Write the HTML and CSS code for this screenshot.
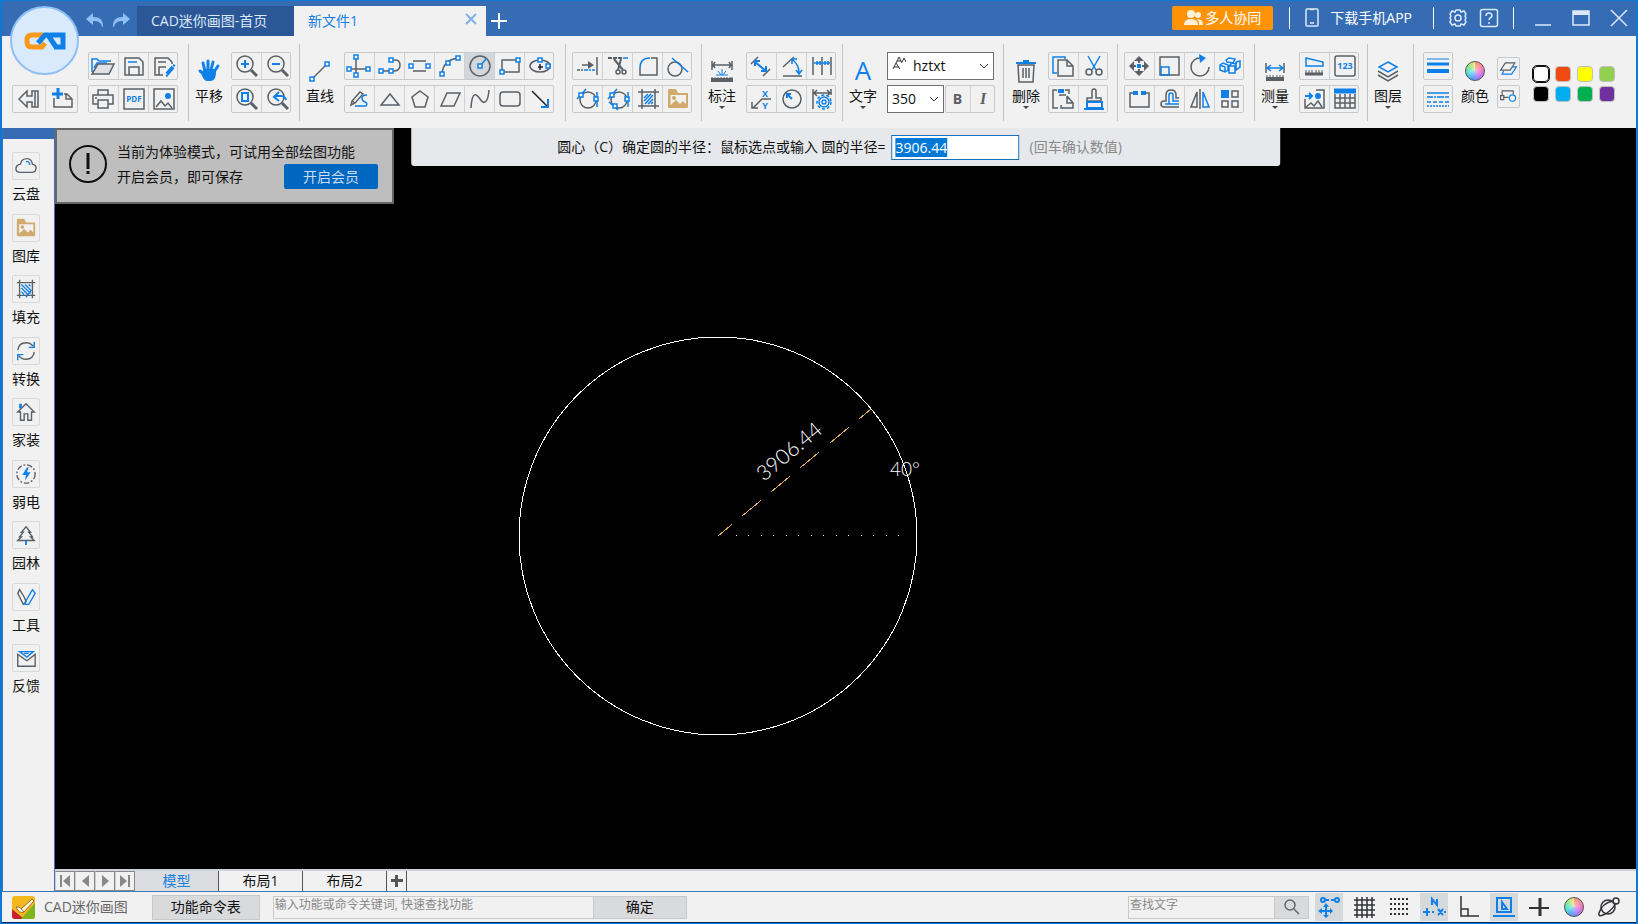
FILE: index.html
```html
<!DOCTYPE html>
<html lang="zh-CN">
<head>
  <meta charset="UTF-8">
  <meta name="viewport" content="width=device-width, initial-scale=1">
  <title>CAD迷你画图</title>
  <link rel="stylesheet" href="styles.css">
</head>
<body>
  <!-- shared icon parts -->
  <svg class="sprite" width="0" height="0">
    <defs><rect id="node" x="-2" y="-2" width="4" height="4"/></defs>
    <symbol id="lens" viewBox="0 0 24 24"><circle cx="11" cy="10" r="8"/><path d="M17 16l6 6" stroke-width="3"/></symbol>
    <symbol id="picfolder" viewBox="0 0 24 24">
      <path d="M2 6V3q0-1 1-1h7l2 4h9q1 0 1 1v13q0 1-1 1H3q-1 0-1-1z" fill="#d2aa6d" stroke="none"/>
      <path d="M4.500 8H20v9l-3-3-3 3-4-4-5.500 5z" fill="#f1f1f1" stroke="none"/>
      <circle cx="8" cy="11" r="2" fill="#d2aa6d" stroke="none"/>
    </symbol>
  </svg>

  <header class="titlebar">
    <div class="logo">
      <svg width="42" height="18" viewBox="0 0 42 18" fill="none">
        <path d="M19 3H8Q3 3 3 8v2q0 5 5 5h10l3-4" class="logo-c"/>
        <path d="M14 11l7-8h3l8 12M26 3h13v12h-9" class="logo-d"/>
      </svg>
    </div>
    <div class="history">
      <button aria-label="撤销"><svg width="18" height="16" viewBox="0 0 18 16"><path d="M0 6l7-6v4c7 0 10 3 10 9q0 1-1 1c-1-5-4-6-9-6v4z"/></svg></button>
      <button aria-label="重做"><svg width="18" height="16" viewBox="0 0 18 16"><path d="M18 6l-7-6v4C4 4 1 7 1 13q0 1 1 1c1-5 4-6 9-6v4z"/></svg></button>
    </div>
    <nav class="file-tabs">
      <a class="file-tab" href="#home">CAD迷你画图-首页</a>
      <a class="file-tab active" href="#file1">新文件1
        <svg width="12" height="12" viewBox="0 0 12 12"><path d="M1 1l10 10M11 1L1 11"/></svg>
      </a>
      <button class="add-tab" aria-label="新建"><svg width="16" height="16" viewBox="0 0 16 16"><path d="M8 0v16M0 8h16"/></svg></button>
    </nav>
    <div class="title-actions">
      <button class="team">
        <svg width="19" height="16" viewBox="0 0 19 16"><circle cx="7" cy="4" r="4"/><path d="M0 15q0-6 7-6t7 6z"/><circle cx="14" cy="5" r="3"/><path d="M15 15q0-4-2-6 6 0 6 6z"/></svg>
        多人协同
      </button>
      <a class="app-link" href="#app">
        <svg width="14" height="19" viewBox="0 0 14 19"><rect x="1" y="1" width="12" height="17" rx="1"/><path d="M5 15h4M5 1.500h4"/></svg>
        下载手机APP
      </a>
      <div class="help">
        <button aria-label="设置"><svg width="20" height="20" viewBox="0 0 20 20"><path d="M8 2h4l1 2 3-1 2 3-1 2 1 2-1 2 1 2-2 3-3-1-1 2H8l-1-2-3 1-2-3 1-2-1-2 1-2-1-2 2-3 3 1z"/><circle cx="10" cy="10" r="3"/></svg></button>
        <button aria-label="帮助"><svg width="20" height="20" viewBox="0 0 20 20"><rect x="1.500" y="1.500" width="17" height="17" rx="2"/><path d="M7 8q0-3 3-3t3 3q0 1-2 2-1 1-1 2M10 14v2"/></svg></button>
      </div>
      <div class="window-buttons">
        <button aria-label="最小化"><svg width="18" height="18" viewBox="0 0 18 18"><path d="M1 16h16"/></svg></button>
        <button aria-label="最大化"><svg width="18" height="18" viewBox="0 0 18 18"><rect x="1" y="2" width="16" height="14"/><path d="M1 4h16" stroke-width="4"/></svg></button>
        <button aria-label="关闭"><svg width="18" height="18" viewBox="0 0 18 18"><path d="M1 1l16 16M17 1L1 17"/></svg></button>
      </div>
    </div>
  </header>

  <section class="ribbon">
    <!-- file -->
    <div class="group file-group">
      <div class="rows bottom">
        <div class="box large">
          <button aria-label="退出"><svg class="icon" viewBox="0 0 24 24"><path d="M2 12l8-8v5h5V4h6v16h-6v-5h-5v5zM18 4v16"/></svg></button>
          <button aria-label="新建文件"><svg class="icon" viewBox="0 0 24 24"><path d="M4 11v9h18v-8l-5-5h-3M16 7v5h6"/><path class="blue" d="M8 1v11M2 7h11" stroke-width="3"/></svg></button>
        </div>
      </div>
      <div class="rows">
        <div class="box">
          <button aria-label="打开"><svg class="icon" viewBox="0 0 24 24"><path class="blue" d="M1 18V5h5l2 2h12M3 14l3-5h10"/><path d="M7 10h16l-5 10H1z" fill="#dfe1e4"/></svg></button>
          <button aria-label="保存"><svg class="icon" viewBox="0 0 24 24"><path d="M3 4h14l4 4v13H3zM7 21v-8h10v8"/><path class="blue" d="M6 8h9"/></svg></button>
          <button aria-label="另存为"><svg class="icon" viewBox="0 0 24 24"><path d="M11 21H3V4h13l4 4v2M7 21v-8h7M6 8h8"/><path class="blue" d="M15 20l6-7" stroke-width="4"/><path class="blue" d="M14 22l2-1M21 11l2 1" stroke-width="2"/></svg></button>
        </div>
        <div class="box">
          <button aria-label="打印"><svg class="icon" viewBox="0 0 24 24"><path d="M7 8V3h10v5M7 17H2V8h20v9h-5M4 11h2"/><rect x="7" y="13" width="10" height="8"/></svg></button>
          <button aria-label="导出PDF"><svg class="icon" viewBox="0 0 24 24"><rect x="2" y="2" width="20" height="20"/><text x="12" y="15" font-size="8">PDF</text></svg></button>
          <button aria-label="导出图片"><svg class="icon" viewBox="0 0 24 24"><rect x="2" y="2" width="20" height="20"/><path d="M4 20l5-6 4 5 3-3 4 5"/><circle class="blue-fill" cx="16" cy="9" r="3"/></svg></button>
        </div>
      </div>
    </div>

    <!-- view -->
    <div class="group tight">
      <button class="tool">
        <svg class="icon" viewBox="0 0 24 24"><path class="hand" d="M8 12L6 4M11 11V2M14 11l2-8M17 13l4-6M8 16l-5-4"/><path class="blue-fill" d="M7 10h10l2 3c0 6-2 9-6 9h-3c-3 0-5-5-6-8z"/></svg>
        <span>平移</span>
      </button>
      <div class="rows">
        <div class="box">
          <button aria-label="放大"><svg class="icon" viewBox="0 0 24 24"><use href="#lens"/><path class="blue" d="M11 6v8M7 10h8" stroke-width="2"/></svg></button>
          <button aria-label="缩小"><svg class="icon" viewBox="0 0 24 24"><use href="#lens"/><path class="blue" d="M7 10h8" stroke-width="2"/></svg></button>
        </div>
        <div class="box">
          <button aria-label="窗口缩放"><svg class="icon" viewBox="0 0 24 24"><use href="#lens"/><rect class="blue" x="8" y="6" width="6" height="8" stroke-width="2"/></svg></button>
          <button aria-label="上一视图"><svg class="icon" viewBox="0 0 24 24"><use href="#lens"/><path class="blue" d="M14 5l-5 5 5 4M9 9h7q4 0 5 4" stroke-width="2"/></svg></button>
        </div>
      </div>
    </div>

    <!-- draw -->
    <div class="group">
      <button class="tool">
        <svg class="icon" viewBox="0 0 24 24"><path d="M5 19L19 5"/><g class="nodes"><use href="#node" x="4" y="20"/><use href="#node" x="19" y="5"/></g></svg>
        <span>直线</span>
      </button>
      <div class="rows">
        <div class="box">
          <button aria-label="构造线"><svg class="icon" viewBox="0 0 24 24"><path d="M9 3v18M2 15h19"/><g class="nodes"><use href="#node" x="9" y="3"/><use href="#node" x="2" y="15"/><use href="#node" x="21" y="15"/><use href="#node" x="9" y="21"/></g></svg></button>
          <button aria-label="多段线"><svg class="icon" viewBox="0 0 24 24"><path d="M3 17h10M13 6h4q5 0 5 5t-5 6h-4"/><g class="nodes"><use href="#node" x="3" y="17"/><use href="#node" x="13" y="17"/><use href="#node" x="13" y="6"/></g></svg></button>
          <button aria-label="双线"><svg class="icon" viewBox="0 0 24 24"><path d="M5 7h13M5 17h13"/><g class="nodes"><use href="#node" x="3" y="12"/><use href="#node" x="20" y="12"/></g></svg></button>
          <button aria-label="圆弧"><svg class="icon" viewBox="0 0 24 24"><path d="M4 20Q5 6 20 4"/><g class="nodes"><use href="#node" x="4" y="20"/><use href="#node" x="10" y="9"/><use href="#node" x="20" y="4"/></g></svg></button>
          <button class="selected" aria-label="圆"><svg class="icon" viewBox="0 0 24 24"><circle cx="12" cy="12" r="10"/><path class="blue" d="M12 12l6-7"/><g class="nodes"><use href="#node" x="12" y="12"/></g></svg></button>
          <button aria-label="矩形"><svg class="icon" viewBox="0 0 24 24"><rect x="4" y="6" width="17" height="12"/><g class="nodes"><use href="#node" x="20" y="6"/><use href="#node" x="4" y="18"/></g></svg></button>
          <button aria-label="椭圆"><svg class="icon" viewBox="0 0 24 24"><ellipse cx="12" cy="12" rx="10" ry="6"/><path d="M12 10v6M10 13h5" stroke="#222"/><g class="nodes"><use href="#node" x="12" y="6"/><use href="#node" x="20" y="12"/></g></svg></button>
        </div>
        <div class="box">
          <button aria-label="手绘"><svg class="icon" viewBox="0 0 24 24"><path d="M4 18l1-4 8-9 3 2-8 9zM5 14l3 2"/><path class="blue" d="M20 8q-5 0-5 3t3 4 1 4H8"/></svg></button>
          <button aria-label="三角形"><svg class="icon" viewBox="0 0 24 24"><path d="M3 18l9-11 9 11z"/></svg></button>
          <button aria-label="多边形"><svg class="icon" viewBox="0 0 24 24"><path d="M12 4l8 6-3 10H7L4 10z"/></svg></button>
          <button aria-label="平行四边形"><svg class="icon" viewBox="0 0 24 24"><path d="M9 6h13l-6 13H3z"/></svg></button>
          <button aria-label="样条曲线"><svg class="icon" viewBox="0 0 24 24"><path d="M3 21C4 4 8 6 12 12s8 4 9-9"/></svg></button>
          <button aria-label="圆角矩形"><svg class="icon" viewBox="0 0 24 24"><rect x="2" y="5" width="20" height="14" rx="3"/></svg></button>
          <button aria-label="箭头"><svg class="icon" viewBox="0 0 24 24"><path d="M4 4l15 15" stroke="#222"/><path class="blue" d="M20 12v8h-7" stroke-width="2"/></svg></button>
        </div>
      </div>
    </div>

    <!-- modify -->
    <div class="group">
      <div class="rows">
        <div class="box">
          <button aria-label="延伸"><svg class="icon" viewBox="0 0 24 24"><path d="M2 16h3M6 16h2M7 11h10M22 3v18"/><path d="M13 7l6 4-6 4z" class="gray-fill"/><path class="blue" d="M9 16h4M14 16h2M17 16h3"/></svg></button>
          <button aria-label="修剪"><svg class="icon" viewBox="0 0 24 24"><path d="M2 4h4M7 4h4M12 4h4M8 5l9 11M15 5l-3 11" stroke-width="2"/><circle cx="12" cy="18" r="2"/><circle cx="18" cy="18" r="2"/><path class="blue" d="M17 4h5"/></svg></button>
          <button aria-label="圆角"><svg class="icon" viewBox="0 0 24 24"><path d="M4 14v7h17V4h-6"/><path class="blue" d="M4 14Q4 4 14 4"/></svg></button>
          <button aria-label="切线"><svg class="icon" viewBox="0 0 24 24"><circle cx="9" cy="15" r="7"/><path class="blue" d="M6 4l16 14"/></svg></button>
        </div>
        <div class="box">
          <button aria-label="两点相切"><svg class="icon" viewBox="0 0 24 24"><circle cx="13" cy="13" r="8"/><path class="blue" d="M2 12L11 2M22 5v15"/><g class="nodes"><use href="#node" x="6" y="8"/><use href="#node" x="21" y="12"/></g></svg></button>
          <button aria-label="三点相切"><svg class="icon" viewBox="0 0 24 24"><circle cx="13" cy="13" r="8"/><path class="blue" d="M2 12L11 2M22 5v15M3 15l9 8"/><g class="nodes"><use href="#node" x="6" y="8"/><use href="#node" x="21" y="12"/><use href="#node" x="9" y="19"/></g></svg></button>
          <button aria-label="图案填充"><svg class="icon" viewBox="0 0 24 24"><path d="M6 2v20M19 2v20M2 5h21M2 19h21"/><path class="blue" d="M8 11l4-4M8 14l7-7M9 17l8-9M12 17l5-5M15 17l2-2"/></svg></button>
          <button aria-label="图片"><svg class="icon" viewBox="0 0 24 24"><use href="#picfolder"/></svg></button>
        </div>
      </div>
    </div>

    <!-- dimension -->
    <div class="group">
      <button class="tool">
        <svg class="icon" viewBox="0 0 24 24"><path d="M2 2v9M22 2v9M2 6h20M5 3L3 6l2 3M19 3l2 3-2 3"/><path class="blue" d="M12 10v6M8 12l3 4M16 12l-3 4M6 16h12" stroke-width="1"/><path d="M1 21h22" stroke-width="4"/><path d="M2 18v2M5 18v2M8 18v2M11 18v2M14 18v2M17 18v2M20 18v2M22 18v2" stroke-width="1"/></svg>
        <span>标注</span><i class="caret"></i>
      </button>
      <div class="rows">
        <div class="box">
          <button aria-label="对齐标注"><svg class="icon" viewBox="0 0 24 24"><path d="M2 10l7-7M14 22l7-7"/><path class="blue" d="M6 8l11 9M6 12V7h5M17 12v5h-5" stroke-width="2"/></svg></button>
          <button aria-label="角度标注"><svg class="icon" viewBox="0 0 24 24"><path d="M3 13L14 3M3 22h19"/><path class="blue" d="M13 6q6 5 6 13M12 10V5h5M16 16l3 4 3-4"/></svg></button>
          <button aria-label="连续标注"><svg class="icon" viewBox="0 0 24 24"><path d="M3 3v18M12 3v18M21 3v18"/><path class="blue" d="M4 9h16M7 7v4M10 7v4M15 7v4M18 7v4"/></svg></button>
        </div>
        <div class="box">
          <button aria-label="坐标标注"><svg class="icon" viewBox="0 0 24 24"><path d="M22 12h-9l-9 9M3 15v6h6"/><text x="16" y="10" font-size="9">X</text><text x="16" y="22" font-size="9">Y</text></svg></button>
          <button aria-label="半径标注"><svg class="icon" viewBox="0 0 24 24"><circle cx="12" cy="12" r="9"/><path class="blue" d="M12 12L7 7M7 11V7h4" stroke-width="2"/></svg></button>
          <button aria-label="标注设置"><svg class="icon" viewBox="0 0 24 24"><path d="M3 2v20M21 2v6M4 6h16M7 3L4 6l3 3M17 3l3 3-3 3"/><circle class="blue" cx="14" cy="15" r="5"/><circle class="blue" cx="14" cy="15" r="2"/><circle class="blue" cx="14" cy="15" r="7" stroke-dasharray="3 2"/></svg></button>
        </div>
      </div>
    </div>

    <!-- text -->
    <div class="group">
      <button class="tool">
        <svg class="icon" viewBox="0 0 24 24"><text class="letter" x="12" y="21" font-size="26">A</text></svg>
        <span>文字</span><i class="caret"></i>
      </button>
      <div class="rows">
        <div class="picker font-picker">
          <select aria-label="字体"><option>hztxt</option></select>
          <svg class="font-mark" width="14" height="14" viewBox="0 0 14 14"><path d="M4 7l3-6 3 6M5 5h4M1 13l3-6 4 6M2 11h5M10 6l2-4 2 4"/></svg>
          <svg class="chevron" width="10" height="6" viewBox="0 0 10 6"><path d="M1 1l4 4 4-4"/></svg>
        </div>
        <div class="text-row">
          <div class="picker size-picker">
            <select aria-label="字高"><option>350</option></select>
            <svg class="chevron" width="10" height="6" viewBox="0 0 10 6"><path d="M1 1l4 4 4-4"/></svg>
          </div>
          <div class="box small">
            <button class="bold">B</button>
            <button class="italic">I</button>
          </div>
        </div>
      </div>
    </div>

    <!-- delete and clipboard -->
    <div class="group delete-group">
      <button class="tool">
        <svg class="icon" viewBox="0 0 24 24"><path d="M4 6h16l-1 17H5zM9 9v10M12 9v10M15 9v10"/><path class="blue" d="M2 4h20M9 2h6" stroke-width="2"/></svg>
        <span>删除</span><i class="caret"></i>
      </button>
      <div class="rows">
        <div class="box">
          <button aria-label="复制"><svg class="icon" viewBox="0 0 24 24"><path class="blue" d="M6 19H2V3h12v2"/><path d="M7 6h9l6 6v10H7zM16 6v6h6"/></svg></button>
          <button aria-label="剪切"><svg class="icon" viewBox="0 0 24 24"><path class="blue" d="M6 2l8 14M18 2l-8 14"/><circle cx="7" cy="18" r="3"/><circle cx="17" cy="18" r="3"/></svg></button>
        </div>
        <div class="box">
          <button aria-label="粘贴"><svg class="icon" viewBox="0 0 24 24"><path d="M6 3H2v18h5M14 3h4v4M9 9V8h6M16 9v7h6v5H10v-3M16 9l6 7"/><path class="blue" d="M7 4h6" stroke-width="4"/></svg></button>
          <button aria-label="格式刷"><svg class="icon" viewBox="0 0 24 24"><path d="M10 11V4q0-2 2-2t2 2v7h5v3H5v-3z"/><path class="blue" d="M5 15h15v6H5zM2 22h20" stroke-width="2"/></svg></button>
        </div>
      </div>
    </div>

    <!-- transform -->
    <div class="group">
      <div class="rows">
        <div class="box">
          <button aria-label="移动"><svg class="icon" viewBox="0 0 24 24"><path class="gray-fill" d="M12 2l5 5h-4v2h-2V7H7zM12 22l5-5h-4v-2h-2v2H7zM2 12l5-5v4h2v2H7v4zM22 12l-5-5v4h-2v2h2v4z"/><path class="blue" d="M10 12h4" stroke-width="4"/></svg></button>
          <button aria-label="缩放"><svg class="icon" viewBox="0 0 24 24"><rect x="2" y="3" width="19" height="18"/><rect class="blue" x="3" y="13" width="8" height="8"/></svg></button>
          <button aria-label="旋转"><svg class="icon" viewBox="0 0 24 24"><path d="M13 4a9 9 0 1 0 8 9"/><path class="blue-fill" d="M11 0l7 4-6 5z"/></svg></button>
          <button aria-label="三维"><svg class="icon" viewBox="0 0 24 24"><path class="blue" d="M2 11l3-2 5 2v5l-3 2-5-2zM2 11l5 2v5M8 6l3-2 6 1-2 4-6-1zM11 12h6v7h-6zM11 12l3-3 4 1-1 2M18 8l4-1v6l-4 3z"/></svg></button>
        </div>
        <div class="box">
          <button aria-label="打断"><svg class="icon" viewBox="0 0 24 24"><path d="M6 6H3v14h19V6h-3"/><path class="blue" d="M6 6h5M14 6h5" stroke-width="4"/></svg></button>
          <button aria-label="偏移"><svg class="icon" viewBox="0 0 24 24"><path d="M21 20H6q-3 0-3-3t3-3h2V8q0-5 5-5t5 5v3h3"/><path class="blue" d="M21 17H7h4V8q0-2 2-2t2 2v6h6"/></svg></button>
          <button aria-label="镜像"><svg class="icon" viewBox="0 0 24 24"><path d="M12 2v20M9 5v15H3z"/><path class="blue" d="M15 5v15h6z"/></svg></button>
          <button aria-label="阵列"><svg class="icon" viewBox="0 0 24 24"><path class="blue-fill" d="M3 3h8v8H3z"/><path d="M14 4h6v6h-6zM4 14h6v6H4zM14 14h6v6h-6z"/></svg></button>
        </div>
      </div>
    </div>

    <!-- measure -->
    <div class="group">
      <button class="tool">
        <svg class="icon" viewBox="0 0 24 24"><path d="M3 4v10M21 4v10"/><path class="blue" d="M4 9h16M8 6L4 9l4 3M16 6l4 3-4 3"/><path d="M3 20h18" stroke-width="4"/><path d="M4 16v3M7 16v3M10 16v3M14 16v3M17 16v3M20 16v3" stroke-width="1"/></svg>
        <span>测量</span><i class="caret"></i>
      </button>
      <div class="rows">
        <div class="box">
          <button aria-label="面积"><svg class="icon" viewBox="0 0 24 24"><path class="blue" d="M4 4v8h17V8z"/><path d="M3 20h18" stroke-width="3"/><path d="M4 16v3M7 16v3M10 16v3M14 16v3M17 16v3M20 16v3" stroke-width="1"/></svg></button>
          <button aria-label="计数"><svg class="icon" viewBox="0 0 24 24"><rect x="2" y="2" width="20" height="20" rx="2"/><text x="12" y="15" font-size="9">123</text></svg></button>
        </div>
        <div class="box">
          <button aria-label="识别图片"><svg class="icon" viewBox="0 0 24 24"><path d="M3 12v9h19V3h-8M4 20l5-4 3 3 4-5 4 6"/><path class="blue" d="M3 9h7M7 6l3 3-3 3" stroke-width="2"/><circle class="blue-fill" cx="16" cy="9" r="3"/></svg></button>
          <button aria-label="表格"><svg class="icon" viewBox="0 0 24 24"><path d="M2 7v14h20V7M2 11h20M2 16h20M7 7v14M12 7v14M17 7v14"/><path class="blue" d="M1 4h22" stroke-width="5"/></svg></button>
        </div>
      </div>
    </div>

    <!-- layers -->
    <div class="group">
      <button class="tool">
        <svg class="icon" viewBox="0 0 24 24"><path class="blue" d="M12 3l9 5-9 5-9-5z"/><path d="M2 12l10 6 10-6M2 16l10 6 10-6"/></svg>
        <span>图层</span><i class="caret"></i>
      </button>
    </div>

    <!-- colour and line style -->
    <div class="group color-group">
      <div class="rows">
        <div class="box"><button aria-label="线宽"><svg class="icon" viewBox="0 0 24 24"><path class="blue" d="M1 5h22" stroke-width="1"/><path class="blue" d="M1 10h22" stroke-width="3"/><path class="blue" d="M1 17h22" stroke-width="4"/></svg></button></div>
        <div class="box"><button aria-label="线型"><svg class="icon" viewBox="0 0 24 24"><path class="blue" d="M1 6h22M1 10h6M8 10h2M11 10h7M19 10h4M1 15h4M7 15h4M13 15h4M19 15h4M1 19h2M4 19h2M7 19h2M10 19h2M13 19h2M16 19h2M19 19h2M22 19h1"/></svg></button></div>
      </div>
      <button class="tool">
        <i class="wheel"></i>
        <span>颜色</span>
      </button>
      <div class="rows compact">
        <div class="box"><button aria-label="随层"><svg class="icon" viewBox="0 0 24 24"><path class="blue" d="M14 10h8l-6 9H4l2-4"/><path d="M8 5h12l-6 9H2z" fill="#f1f1f1"/></svg></button></div>
        <div class="box"><button aria-label="随块"><svg class="icon" viewBox="0 0 24 24"><path d="M2 11h4v5H2zM4 11V5h14v4M6 13h6"/><circle class="blue" cx="17" cy="14" r="4"/></svg></button></div>
      </div>
      <div class="swatches">
        <button class="white current" aria-label="白"></button>
        <button class="orange" aria-label="橙"></button>
        <button class="yellow" aria-label="黄"></button>
        <button class="lime" aria-label="浅绿"></button>
        <button class="black" aria-label="黑"></button>
        <button class="cyan" aria-label="蓝"></button>
        <button class="green" aria-label="绿"></button>
        <button class="purple" aria-label="紫"></button>
      </div>
    </div>
  </section>

  <main class="workspace">
    <aside class="sidebar">
      <nav class="side-nav">
        <button><svg class="icon" viewBox="0 0 24 24"><path d="M6 19q-5 0-5-4t5-5q1-6 7-6 5 0 6 6 4 1 4 4 0 5-5 5z"/><path class="blue" d="M12 7q4 0 4 4"/></svg><span>云盘</span></button>
        <button><svg class="icon" viewBox="0 0 24 24"><use href="#picfolder"/></svg><span>图库</span></button>
        <button><svg class="icon" viewBox="0 0 24 24"><path d="M5 2v20M19 2v20M2 5h20M2 19h20"/><path class="blue" d="M7 15l3 3M7 11l7 7M7 7l10 10M11 7l6 6M15 7l2 2M12 21l6-8"/></svg><span>填充</span></button>
        <button><svg class="icon" viewBox="0 0 24 24"><path d="M3 11Q4 3 12 3q5 0 8 4M21 13q-1 8-9 8-5 0-8-4"/><path class="blue" d="M21 2v6h-6M3 22v-6h6"/></svg><span>转换</span></button>
        <button><svg class="icon" viewBox="0 0 24 24"><path d="M3 12l9-9 9 9h-3v9h-4v-7h-4v7H6v-9z"/><path class="blue" d="M6 3v5" stroke-width="3"/></svg><span>家装</span></button>
        <button><svg class="icon" viewBox="0 0 24 24"><circle cx="12" cy="12" r="10" stroke-dasharray="6 2 2 2"/><path class="blue-fill" d="M13 5l-5 8h4l-1 6 6-9h-4l2-5z"/></svg><span>弱电</span></button>
        <button><svg class="icon" viewBox="0 0 24 24"><path d="M12 3l5 6h-2l4 5h-2l4 4H3l4-4H5l4-5H7z"/><path class="blue" d="M12 18v5" stroke-width="2"/></svg><span>园林</span></button>
        <button><svg class="icon" viewBox="0 0 24 24"><path d="M5 4L3 8l6 12 3-3-2-5z"/><path class="blue" d="M19 4l3 4-7 12h-4l1-4z"/></svg><span>工具</span></button>
        <button><svg class="icon" viewBox="0 0 24 24"><path d="M3 8v13h19V8l-9 7z"/><path class="blue" d="M5 5h15l-7 6zM10 7h5"/></svg><span>反馈</span></button>
      </nav>
    </aside>

    <div class="view">
      <div class="canvas">
        <svg class="drawing" width="100%" height="100%">
          <circle class="shape" cx="663" cy="408" r="199"/>
          <path class="radius-line" d="M663 408L816 281"/>
          <path class="base-line" d="M681 407H846"/>
          <text x="0" y="0" font-size="21" transform="translate(709 354) rotate(-40)">3906.44</text>
          <text x="835" y="348" font-size="19">40°</text>
        </svg>

        <div class="notice">
          <svg width="38" height="38" viewBox="0 0 38 38"><circle cx="19" cy="19" r="18"/><path d="M19 8v16M19 26v3" stroke-width="3"/></svg>
          <p>当前为体验模式，可试用全部绘图功能</p>
          <p>开启会员，即可保存</p>
          <button>开启会员</button>
        </div>

        <form class="prompt">
          <label for="radius">圆心（C）确定圆的半径：鼠标选点或输入 圆的半径=</label>
          <input id="radius" type="text" value="3906.44">
          <span class="hint">(回车确认数值)</span>
        </form>
      </div>

      <nav class="layouts">
        <button class="step" aria-label="第一个"><svg width="12" height="12" viewBox="0 0 12 12"><path d="M1 0h2v12H1zM11 0v12L4 6z"/></svg></button>
        <button class="step" aria-label="上一个"><svg width="12" height="12" viewBox="0 0 12 12"><path d="M10 0v12L3 6z"/></svg></button>
        <button class="step" aria-label="下一个"><svg width="12" height="12" viewBox="0 0 12 12"><path d="M3 0v12l7-6z"/></svg></button>
        <button class="step" aria-label="最后一个"><svg width="12" height="12" viewBox="0 0 12 12"><path d="M9 0h2v12H9zM1 0v12l7-6z"/></svg></button>
        <a class="layout active" href="#model">模型</a>
        <a class="layout" href="#layout1">布局1</a>
        <a class="layout" href="#layout2">布局2</a>
        <button class="step add" aria-label="新建布局"><svg width="14" height="14" viewBox="0 0 14 14"><path d="M5 1h3v4h5v3H8v5H5V8H1V5h4z"/></svg></button>
      </nav>
    </div>
  </main>

  <footer class="statusbar">
    <svg class="app-icon" width="23" height="23" viewBox="0 0 23 23">
      <rect width="23" height="23" rx="3" fill="#f3b81c"/>
      <path d="M0 13v7q0 3 3 3h9z" fill="#c8202c"/>
      <path d="M23 7v13q0 3-3 3H9z" fill="#7fb51c"/>
      <path d="M9 13L20 3l2 2-10 11z" fill="#fff4d0" stroke="#a06a20"/>
      <path d="M4 11q4-1 8 5-5 2-8-5z" fill="#fff" stroke="#a06a20"/>
    </svg>
    <span class="app-name">CAD迷你画图</span>
    <button class="commands">功能命令表</button>
    <form class="command-line">
      <input type="text" aria-label="命令" placeholder="输入功能或命令关键词, 快速查找功能">
      <button type="button">确定</button>
    </form>
    <form class="search">
      <input type="text" aria-label="查找文字" placeholder="查找文字">
      <button type="button" aria-label="查找"><svg width="16" height="16" viewBox="0 0 16 16"><circle cx="6" cy="6" r="5"/><path d="M10 10l5 5"/></svg></button>
    </form>
    <div class="modes">
      <button class="on" aria-label="对象捕捉"><svg class="icon" viewBox="0 0 24 24"><path class="blue" d="M9 5h3M14 5h3" stroke-width="2"/><circle class="blue" cx="6" cy="5" r="2" stroke-width="2"/><circle class="blue" cx="20" cy="5" r="2" stroke-width="2"/><path class="blue-fill" d="M9 8l3 4h-2v3h3v-2l3 3-3 3v-2h-3v3h2l-3 3-3-3h2v-3H5v2l-4-3 4-3v2h3v-3H6z"/></svg></button>
      <button aria-label="栅格"><svg class="icon dark" viewBox="0 0 24 24"><path d="M5 2v21M10 2v21M15 2v21M20 2v21M2 5h21M2 10h21M2 15h21M2 20h21"/></svg></button>
      <button aria-label="捕捉"><svg class="icon dark" viewBox="0 0 24 24"><path d="M3 4h19M3 9h19M3 14h19M3 19h19" stroke-width="2" stroke-dasharray="2 2"/></svg></button>
      <button class="on" aria-label="极轴"><svg class="icon" viewBox="0 0 24 24"><path class="blue" d="M10 10V4l5 6V4M5 13v8M1 17h7M10 17h2M16 14l5 6M21 14l-5 6M22 17h2" stroke-width="2"/></svg></button>
      <button aria-label="正交"><svg class="icon dark" viewBox="0 0 24 24"><path d="M4 1v20h18M4 14h7v7"/></svg></button>
      <button class="on" aria-label="动态输入"><svg class="icon" viewBox="0 0 24 24"><path class="blue" d="M5 3h14v14H5zM1 21h22" stroke-width="2"/><path class="blue" d="M10 7v7h5z" stroke-width="2"/></svg></button>
      <button aria-label="十字光标"><svg class="icon dark" viewBox="0 0 24 24"><path d="M13 3v18" stroke-width="3"/><path d="M2 13h20" stroke-width="2"/></svg></button>
      <button aria-label="背景颜色"><i class="wheel"></i></button>
      <button aria-label="视图"><svg class="icon dark" viewBox="0 0 24 24"><circle cx="11" cy="12" r="7"/><path d="M16 6Q5 8 2 18q-1 4 4 2 8-3 13-12"/><circle cx="19" cy="6" r="3"/></svg></button>
    </div>
  </footer>

  <script>
    // the radius box is ready for typing over as soon as the page opens
    const radius = document.getElementById("radius");
    radius.focus();
    radius.select();
  </script>
</body>
</html>
```
FILE: styles.css
```css
*, *::before, *::after {
  box-sizing: border-box;
}
body {
  display: flex;
  flex-direction: column;
  height: 100vh;
  margin: 0;
  border: 1px solid #0f78d4;
  border-width: 1px 2px 1px 2px;
  background: #f1f1f1;
  color: #111;
  font: 14px/20px "Open Sans", "Noto Sans CJK SC", sans-serif;
  overflow: hidden;
}
button, input, select {
  margin: 0;
  padding: 0;
  border: 0;
  background: none;
  color: inherit;
  font: inherit;
}
button {
  display: flex;
  align-items: center;
  justify-content: center;
}
a {
  color: inherit;
  text-decoration: none;
}
p {
  margin: 0;
}
.sprite {
  position: absolute;
}

/* Icons */
.icon {
  width: 24px;
  height: 24px;
  flex: none;
  fill: none;
  stroke: #5a6066;
  stroke-width: 1.5;
  overflow: visible;
}
.icon text {
  fill: #0f80e8;
  stroke: none;
  font-family: "Open Sans", sans-serif;
  font-weight: bold;
  text-anchor: middle;
}
.icon .letter {
  font-weight: normal;
}
.dark {
  stroke: #303236;
}
.blue {
  stroke: #0f80e8;
}
.blue-fill {
  fill: #0f80e8;
  stroke: none;
}
.gray-fill {
  fill: #5a6066;
  stroke: none;
}
.hand {
  stroke: #0f80e8;
  stroke-width: 3;
  stroke-linecap: round;
}
.nodes {
  fill: #fff;
  stroke: #0f80e8;
}
.wheel {
  width: 20px;
  height: 20px;
  border: 1px solid #555;
  border-radius: 50%;
  background: radial-gradient(#fff8, #fff0 70%), conic-gradient(#f99a6a, #f06ac0 90deg, #b06af0 140deg, #4a9af5 200deg, #4ae0d0 260deg, #8ae87a 310deg, #f5e07a);
}

/* Title bar */
.titlebar {
  display: flex;
  flex: none;
  height: 35px;
  background: #366cb4;
  color: #fff;
}
.titlebar svg {
  fill: none;
  stroke: #dce8f8;
  stroke-width: 1.5;
}
.logo {
  position: absolute;
  top: 6px;
  left: 10px;
  display: flex;
  align-items: center;
  justify-content: center;
  width: 69px;
  height: 69px;
  border: 2px solid #90bff5;
  border-radius: 50%;
  background: #d8eafc;
}
.titlebar .logo svg {
  stroke-width: 5;
}
.logo-c {
  stroke: #f79a1c;
}
.logo-d {
  stroke: #0f80e8;
}
.history {
  display: flex;
  gap: 8px;
  margin-left: 84px;
  padding-right: 7px;
}
.titlebar .history svg {
  fill: #90bff5;
  stroke: none;
}
.history button {
  padding-top: 4px;
}
.file-tabs {
  display: flex;
  padding-top: 5px;
}
.file-tab {
  display: flex;
  align-items: center;
  width: 157px;
  padding-left: 14px;
  background: #2b5797;
  color: #dce8f8;
}
.file-tab.active {
  justify-content: space-between;
  width: 192px;
  padding: 0 9px 0 14px;
  background: #f1f1f1;
  color: #1a80e0;
}
.titlebar .file-tab svg {
  margin-bottom: 4px;
  stroke: #80b0f0;
  stroke-width: 2;
}
.add-tab {
  width: 26px;
}
.titlebar .add-tab svg {
  stroke: #fff;
  stroke-width: 2;
}
.title-actions {
  display: flex;
  align-items: center;
  height: 33px;
  margin-left: auto;
}
.team {
  gap: 2px;
  width: 101px;
  height: 24px;
  border-radius: 2px;
  background: #ff9308;
}
.titlebar .team svg {
  fill: #fff0d8;
  stroke: none;
}
.app-link {
  display: flex;
  align-items: center;
  gap: 11px;
  height: 22px;
  margin-left: 16px;
  padding: 0 21px 0 15px;
  border: solid #fff;
  border-width: 0 1px;
}
.help {
  display: flex;
  gap: 11px;
  height: 22px;
  padding: 0 14px;
  border-right: 1px solid #fff;
}
.window-buttons {
  display: flex;
  gap: 20px;
  padding: 0 8px 0 20px;
}

/* Ribbon */
.ribbon {
  display: grid;
  grid-template-columns: 187px 111px 266px 136px 141px 161px 114px 137px 113px 46px auto;
  flex: none;
  height: 92px;
  padding: 8px 0 7px;
}
.group {
  display: flex;
  align-items: flex-start;
  gap: 10px;
  padding: 8px 0 0 6px;
  border-right: 1px solid #c2c2c2;
}
.file-group {
  padding-left: 10px;
}
.tight {
  gap: 8px;
}
.delete-group {
  gap: 8px;
  padding-left: 8px;
}
.color-group {
  gap: 8px;
  padding-left: 9px;
  border: 0;
}
.rows {
  display: flex;
  flex-direction: column;
  gap: 5px;
}
.rows.bottom {
  padding-top: 33px;
}
.box {
  display: flex;
  outline: 1px solid #c8c9cb;
  outline-offset: -1px;
  border-radius: 2px;
}
.box button {
  width: 30px;
  height: 28px;
}
.box button + button {
  border-left: 1px solid #d0d1d3;
}
.box.large button {
  width: 33px;
}
.box.small button {
  width: 25px;
}
.box .selected {
  background: #d3d6db;
}
.compact {
  padding-top: 5px;
}
.compact .box button {
  width: 23px;
  height: 23px;
}
.compact .icon {
  width: 19px;
  height: 19px;
}
.tool {
  flex-direction: column;
  width: 28px;
  padding-top: 7px;
  white-space: nowrap;
}
.tool span {
  margin-top: 3px;
}
.tool .wheel {
  margin: 2px 0;
}
.caret {
  border: 3px solid transparent;
  border-top-color: #444;
}
.picker {
  display: grid;
  height: 28px;
  border: 1px solid #707070;
  background: #fff;
}
.picker > * {
  grid-area: 1 / 1;
}
.picker select {
  width: 100%;
  padding-left: 4px;
  appearance: none;
}
.picker svg {
  align-self: center;
  fill: none;
  stroke: #333;
  pointer-events: none;
}
.picker .chevron {
  justify-self: end;
  margin-right: 4px;
}
.picker .font-mark {
  margin: 0 0 6px 4px;
}
.font-picker {
  width: 107px;
}
.font-picker select {
  padding-left: 25px;
}
.size-picker {
  width: 57px;
}
.text-row {
  display: flex;
  gap: 1px;
}
.bold, .italic {
  color: #5a6066;
  font-weight: bold;
}
.italic {
  font-family: "Liberation Serif", serif;
  font-size: 16px;
  font-style: italic;
}
.swatches {
  display: grid;
  grid-template-columns: repeat(4, 16px);
  gap: 4px 6px;
  margin: 14px 0 0 5px;
}
.swatches button {
  width: 16px;
  height: 16px;
  border: 1px solid #c0c0c0;
  border-radius: 4px;
}
.swatches .current {
  outline: 1px solid #111;
  border-color: #111;
}
.white { background: #fff; }
.orange { background: #f04a12; }
.yellow { background: #ff0; }
.lime { background: #92d050; }
.black { background: #000; }
.cyan { background: #00aef0; }
.green { background: #00b050; }
.purple { background: #7030a0; }

/* Workspace */
.workspace {
  display: flex;
  flex: 1;
  min-height: 0;
}
.sidebar {
  width: 53px;
  border: 1px solid #3a74b8;
  border-top: 11px solid #366cb4;
}
.side-nav {
  display: flex;
  flex-direction: column;
  justify-content: space-between;
  height: 557px;
  padding: 13px 0 0 8px;
}
.side-nav button {
  flex-direction: column;
  gap: 4px;
  width: 30px;
}
.side-nav .icon {
  width: 28px;
  height: 28px;
  padding: 2px;
  border: 1px solid #d8d9db;
  border-radius: 2px;
}
.view {
  display: flex;
  flex: 1;
  flex-direction: column;
  min-width: 0;
  border-bottom: 1px solid #3a7db8;
}
.canvas {
  position: relative;
  flex: 1;
  background: #000;
}
.drawing {
  position: absolute;
  fill: none;
  shape-rendering: crispEdges;
}
.drawing text {
  fill: #fff;
  font-family: Lato, sans-serif;
  font-weight: 300;
}
.shape {
  stroke: #fff;
}
.radius-line {
  stroke: #e0b068;
  stroke-dasharray: 25 13;
  stroke-dashoffset: 7;
}
.base-line {
  stroke: #fff;
  stroke-dasharray: 1 11 1 12;
}
.notice {
  position: absolute;
  top: 0;
  left: 0;
  display: grid;
  grid-template-columns: 38px 177px 94px;
  grid-template-rows: 25px 25px;
  align-items: center;
  width: 339px;
  height: 76px;
  padding: 9px 12px;
  border: 2px solid #666;
  background: #bebebe;
}
.notice svg {
  grid-row: 1 / 3;
  fill: none;
  stroke: #111;
  stroke-width: 2;
}
.notice p {
  padding-left: 10px;
}
.notice p:first-of-type {
  grid-column: 2 / 4;
}
.notice button {
  height: 25px;
  border-radius: 2px;
  background: #0067c0;
  color: #c8dcf2;
}
.prompt {
  position: absolute;
  top: 0;
  left: 50%;
  display: flex;
  align-items: center;
  justify-content: center;
  width: 55%;
  height: 38px;
  padding-right: 12px;
  border-radius: 0 0 3px 3px;
  background: #e6e8ec;
  transform: translateX(-50%);
}
.prompt input {
  width: 128px;
  height: 25px;
  margin: 0 10px 0 6px;
  padding-left: 3px;
  border: 1px solid #1a6fb8;
  outline: 0;
  background: #fff;
}
.prompt ::selection {
  background: #0078d7;
  color: #fff;
}
.hint {
  color: #8a8a8a;
}

/* Layout tabs */
.layouts {
  display: flex;
  height: 22px;
  border-top: 2px solid #cfd3d8;
}
.step {
  width: 20px;
  border: 1px solid #888;
  border-left-color: #ccc;
}
.step svg {
  fill: #888;
}
.layout {
  width: 84px;
  border-right: 1px solid #555;
  text-align: center;
}
.layout.active {
  background: #dcdde0;
  color: #1a80e0;
}
.add {
  border: 0;
  border-right: 1px solid #555;
}
.add svg {
  fill: #555;
}

/* Status bar */
.statusbar {
  display: flex;
  flex: none;
  align-items: center;
  height: 31px;
  padding: 0 13px 0 10px;
  border-bottom: 1px solid #0a2a66;
}
.app-name {
  margin: 0 24px 0 9px;
  color: #666;
}
.commands {
  width: 108px;
  height: 25px;
  border: 1px solid #c8c9cb;
  background: #d9dadc;
}
.command-line, .search {
  display: flex;
  height: 23px;
  border: 1px solid #c8c9cb;
}
.command-line {
  width: 414px;
  margin-left: 13px;
}
.search {
  width: 181px;
  margin-left: auto;
}
.command-line input, .search input {
  flex: 1;
  min-width: 0;
  padding: 0 1px 5px;
  font-size: 12px;
  line-height: 16px;
}
.statusbar input::placeholder {
  color: #888;
}
.command-line button, .search button {
  border-left: 1px solid #c8c9cb;
  background: #d9dadc;
}
.command-line button {
  width: 93px;
}
.search button {
  width: 34px;
}
.search svg {
  fill: none;
  stroke: #666;
  stroke-width: 1.5;
}
.modes {
  display: flex;
  gap: 7px;
  margin-left: 6px;
}
.modes button {
  width: 28px;
  height: 28px;
}
.modes .on {
  background: #d6d9dc;
}
```
